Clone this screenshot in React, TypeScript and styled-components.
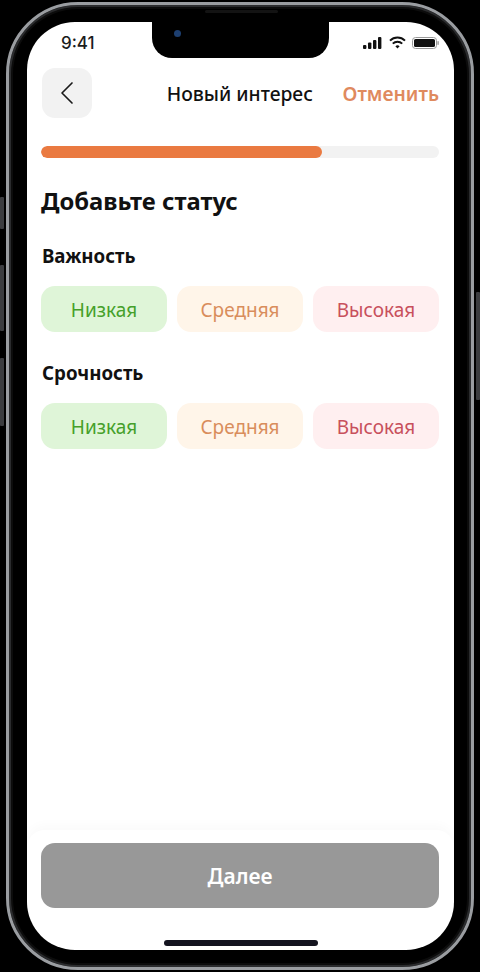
import React from 'react';
import styled, { createGlobalStyle } from 'styled-components';
import { ChevronLeft } from 'lucide-react';

const GlobalStyle = createGlobalStyle`
    html, body {
        margin: 0;
        padding: 0;
        background: #000;
    }
    body {
        font-family: "Noto Sans", "Open Sans", sans-serif;
    }
`;

const Page = styled.div`
    width: 480px;
    height: 972px;
    box-sizing: border-box;
    padding: 2px 6px;
    background: #000;
    overflow: hidden;
`;

const Phone = styled.div`
    position: relative;
    box-sizing: border-box;
    width: 468px;
    height: 968px;
    padding: 17px 17px 17px 18px;
    border-radius: 72px;
    border: 3px solid #9a9da1;
    box-shadow: inset 0 0 0 2px #2b2c2e, inset 0 0 0 4px #0c0c0c;
    background: #000;
    display: flex;
`;

const SideButton = styled.div<{ $side: 'left' | 'right'; $top: number; $height: number }>`
    position: absolute;
    ${(p) => p.$side}: -9px;
    top: ${(p) => p.$top}px;
    width: 4px;
    height: ${(p) => p.$height}px;
    background: #3c3d40;
    border-radius: 1px;
`;

const Speaker = styled.div`
    position: absolute;
    top: 5px;
    left: 196px;
    width: 73px;
    height: 3px;
    border-radius: 2px;
    background: #131313;
`;

const Screen = styled.div`
    position: relative;
    flex: 1;
    display: flex;
    flex-direction: column;
    border-radius: 48px;
    background: #fff;
    overflow: hidden;
    color: #111;
`;

const Notch = styled.div`
    position: absolute;
    top: 0;
    left: 125px;
    width: 177px;
    height: 36px;
    background: #000;
    border-radius: 0 0 20px 20px;
`;

const Camera = styled.div`
    position: absolute;
    top: 8px;
    left: 22px;
    width: 7px;
    height: 7px;
    border-radius: 50%;
    background: #1d3f70;
`;

const StatusBar = styled.div`
    height: 46px;
    flex: none;
    box-sizing: border-box;
    padding: 0 15px 5px 34px;
    display: flex;
    align-items: center;
    justify-content: space-between;
`;

const Time = styled.span`
    font-size: 17px;
    font-weight: 500;
    font-family: Inter, sans-serif;
    color: #1c1c1c;
`;

const StatusIcons = styled.div`
    display: flex;
    align-items: center;
    gap: 6px;
`;

const Content = styled.div`
    flex: 1;
    padding: 0 15px 0 14px;
    display: flex;
    flex-direction: column;
`;

const Header = styled.div`
    display: flex;
    align-items: center;
    justify-content: space-between;
    height: 50px;
`;

const BackButton = styled.div`
    width: 50px;
    height: 50px;
    margin-left: 1px;
    border-radius: 13px;
    background: #f2f2f2;
    display: flex;
    align-items: center;
    justify-content: center;
    color: #1a1a1a;
`;

const HeaderTitle = styled.div`
    font-size: 19.3px;
    font-weight: 500;
    margin-left: 45px;
`;

const CancelLink = styled.div`
    font-size: 19.3px;
    font-weight: 600;
    color: #df8a5e;
`;

const ProgressTrack = styled.div`
    margin-top: 28px;
    height: 12px;
    border-radius: 6px;
    background: #f2f2f2;
    overflow: hidden;
`;

const ProgressFill = styled.div`
    height: 100%;
    border-radius: 6px;
    background: #ea7a41;
`;

const Heading = styled.h1`
    margin: 27px 0 0;
    font-size: 23.8px;
    line-height: 32px;
    font-weight: 700;
`;

const SectionLabel = styled.div<{ $gap: number }>`
    margin: ${(p) => p.$gap}px 0 0 1px;
    font-size: 18.7px;
    line-height: 24px;
    font-weight: 700;
`;

const OptionRow = styled.div`
    margin-top: 18px;
    display: grid;
    grid-template-columns: repeat(3, 1fr);
    gap: 10px;
`;

const tones = {
    low: { bg: '#dff5d8', fg: '#45a02a' },
    mid: { bg: '#fff5e9', fg: '#d98d5c' },
    high: { bg: '#ffeff0', fg: '#c8505c' },
};

const Option = styled.div<{ $tone: keyof typeof tones }>`
    height: 46px;
    box-sizing: border-box;
    padding-top: 2px;
    border-radius: 14px;
    display: flex;
    align-items: center;
    justify-content: center;
    font-size: 19px;
    background: ${(p) => tones[p.$tone].bg};
    color: ${(p) => tones[p.$tone].fg};
`;

const Footer = styled.div`
    flex: none;
    height: 120px;
    box-sizing: border-box;
    padding: 13px 15px 0 14px;
    border-radius: 18px 18px 0 0;
    box-shadow: 0 -6px 10px rgba(0, 0, 0, 0.018);
    position: relative;
`;

const NextButton = styled.div`
    height: 65px;
    border-radius: 14px;
    background: #989898;
    color: #fff;
    font-size: 21px;
    font-weight: 600;
    display: flex;
    align-items: center;
    justify-content: center;
`;

const HomeIndicator = styled.div`
    position: absolute;
    left: 137px;
    bottom: 4px;
    width: 154px;
    height: 6px;
    border-radius: 3px;
    background: #14141f;
`;

const options = [
    { tone: 'low', label: 'Низкая' },
    { tone: 'mid', label: 'Средняя' },
    { tone: 'high', label: 'Высокая' },
] as const;

function StatusRow() {
    return (
        <OptionRow>
            {options.map((o) => (
                <Option key={o.tone} $tone={o.tone}>
                    {o.label}
                </Option>
            ))}
        </OptionRow>
    );
}

export default function App() {
    return (
        <Page>
            <GlobalStyle />
            <Phone>
                <SideButton $side="left" $top={192} $height={32} />
                <SideButton $side="left" $top={260} $height={66} />
                <SideButton $side="left" $top={353} $height={68} />
                <SideButton $side="right" $top={287} $height={108} />
                <Speaker />
                <Screen>
                    <StatusBar>
                        <Time>9:41</Time>
                        <StatusIcons>
                            <svg width="20" height="12" viewBox="0 0 20 12" fill="#111">
                                <rect x="0" y="8" width="3.4" height="4" rx="1" />
                                <rect x="5" y="5.5" width="3.4" height="6.5" rx="1" />
                                <rect x="10" y="3" width="3.4" height="9" rx="1" />
                                <rect x="15" y="0" width="3.4" height="12" rx="1" />
                            </svg>
                            <svg width="17" height="13" viewBox="0 0 17 13" fill="none" stroke="#111" strokeWidth="2">
                                <path d="M1 4.6a10.6 10.6 0 0 1 15 0" />
                                <path d="M3.8 7.6a6.6 6.6 0 0 1 9.4 0" />
                                <path d="M8.5 12.6 6.4 10.2a3 3 0 0 1 4.2 0z" fill="#111" stroke="none" />
                            </svg>
                            <svg width="27" height="12" viewBox="0 0 27 12" fill="none">
                                <rect x="0.5" y="0.5" width="24" height="11" rx="3" stroke="#999" />
                                <rect x="2" y="2" width="21" height="8" rx="1.6" fill="#111" />
                                <rect x="25.4" y="4" width="1.4" height="4" rx="0.7" fill="#999" />
                            </svg>
                        </StatusIcons>
                    </StatusBar>
                    <Content>
                        <Header>
                            <BackButton>
                                <ChevronLeft size={40} strokeWidth={1} />
                            </BackButton>
                            <HeaderTitle>Новый интерес</HeaderTitle>
                            <CancelLink>Отменить</CancelLink>
                        </Header>
                        <ProgressTrack>
                            <ProgressFill style={{ width: '70.6%' }} />
                        </ProgressTrack>
                        <Heading>Добавьте статус</Heading>
                        <SectionLabel $gap={27}>Важность</SectionLabel>
                        <StatusRow />
                        <SectionLabel $gap={29}>Срочность</SectionLabel>
                        <StatusRow />
                    </Content>
                    <Footer>
                        <NextButton>Далее</NextButton>
                        <HomeIndicator />
                    </Footer>
                    <Notch>
                        <Camera />
                    </Notch>
                </Screen>
            </Phone>
        </Page>
    );
}
